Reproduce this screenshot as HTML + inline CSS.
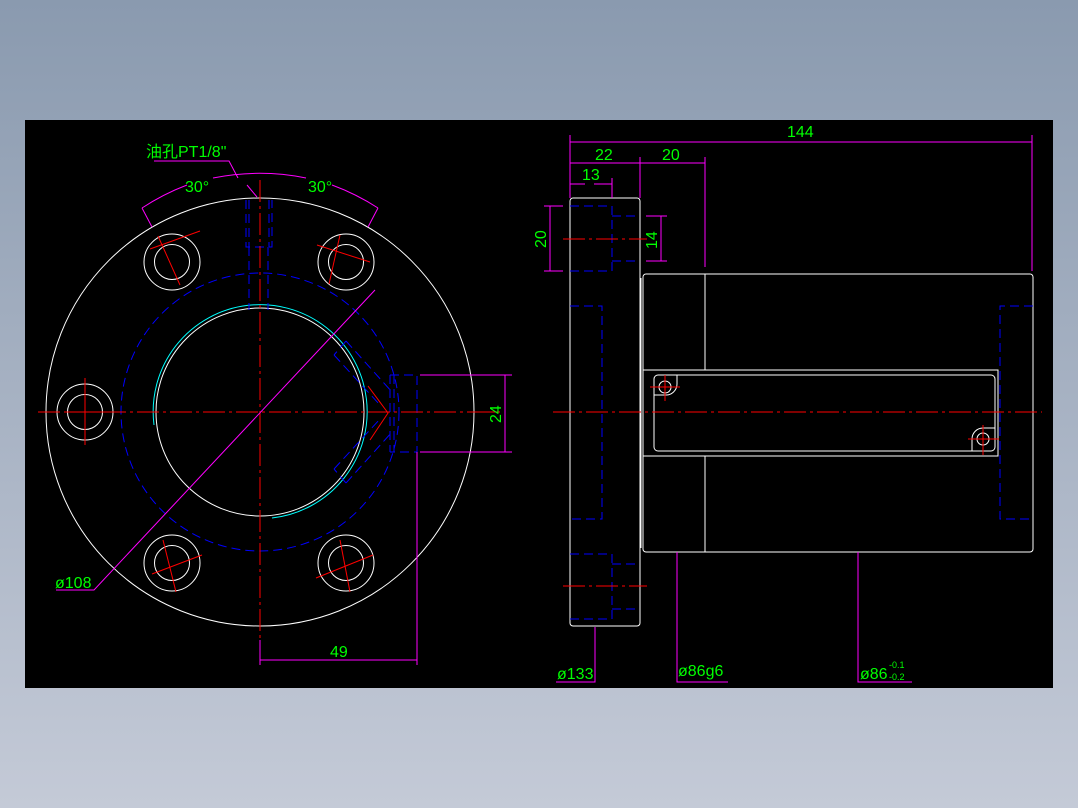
<!DOCTYPE html>
<html><head><meta charset="utf-8"><style>
html,body{margin:0;padding:0;width:1078px;height:808px;overflow:hidden;background:linear-gradient(#8a9aaf,#c4cad7);}
svg{display:block}
text{font-family:"Liberation Sans","Noto Sans CJK SC",sans-serif;fill:#00ff00;font-size:16px}
</style></head><body>
<svg width="1078" height="808" viewBox="0 0 1078 808">
<defs>
<linearGradient id="bg" x1="0" y1="0" x2="0" y2="1"><stop offset="0" stop-color="#8a9aaf"/><stop offset="1" stop-color="#c4cad7"/></linearGradient>
</defs>
<rect width="1078" height="808" fill="url(#bg)"/>
<rect x="25" y="120" width="1028" height="568" fill="#000"/>

<!-- LEFT VIEW -->
<g fill="none" stroke="#fff" stroke-width="1">
<circle cx="260" cy="412" r="214"/>
<circle cx="260" cy="412" r="104"/>
<circle cx="172" cy="262" r="28"/><circle cx="172" cy="262" r="17.5"/>
<circle cx="346" cy="262" r="28"/><circle cx="346" cy="262" r="17.5"/>
<circle cx="85" cy="412" r="28"/><circle cx="85" cy="412" r="17.5"/>
<circle cx="172" cy="563" r="28"/><circle cx="172" cy="563" r="17.5"/>
<circle cx="346" cy="563" r="28"/><circle cx="346" cy="563" r="17.5"/>
</g>
<path d="M154 425 A107 107 0 1 1 272 518" fill="none" stroke="#00ffff" stroke-width="1"/>
<g fill="none" stroke="#0000ff" stroke-width="1" stroke-dasharray="9 5">
<circle cx="260" cy="412" r="139"/>
<path d="M246 200V247H272V200M249 247V310M268 247V310M249 200V247M269 200V247"/>
<path d="M390 375H417V452H390M390 375V452M394 375V452"/>
<path d="M346 341L392 392M334 355L380 405M346 483L392 432M334 469L380 419"/>
<path d="M346 341L334 355M346 483L334 469"/>
</g>
<g fill="none" stroke="#ff0000" stroke-width="1">
<path d="M38 412H475" stroke-dasharray="22 4 3 4"/>
<path d="M475 412H500"/>
<path d="M260 180V640" stroke-dasharray="22 4 3 4"/>
<path d="M368 386L388 413L370 440"/>
<path d="M150 249L200 231M158 236L180 285"/>
<path d="M317 245L370 262M340 235L329 284"/>
<path d="M85 378V445M64 412H106" />
<path d="M152 574L202 555M163 540L176 592"/>
<path d="M316 578L373 555M340 540L350 592"/>
</g>
<g fill="none" stroke="#ff00ff" stroke-width="1">
<path d="M142 208A235 235 0 0 1 187 185M213 178A235 235 0 0 1 306 178M332 185A235 235 0 0 1 378 208"/>
<path d="M142 208L152 227M378 208L368 227"/>
<path d="M154 161H229L238 178M247 185L257 197"/>
<path d="M375 290L94 590H56"/>
<path d="M420 375H512M420 452H512M505 375V452"/>
<path d="M417 452V665M260 640V665M260 660H417"/>
</g>
<text x="146" y="157">油孔PT1/8"</text>
<text x="185" y="192">30°</text>
<text x="308" y="192">30°</text>
<text x="55" y="588">ø108</text>
<text x="330" y="657">49</text>
<text transform="translate(501,423) rotate(-90)">24</text>

<!-- RIGHT VIEW -->
<g fill="none" stroke="#fff" stroke-width="1">
<rect x="570" y="198" width="70" height="428" rx="3"/>
<rect x="643" y="274" width="390" height="278" rx="3"/>
<path d="M641 278V548M705 274V370M705 456V552"/>
<rect x="643" y="370" width="355" height="86"/>
<rect x="654" y="375" width="341" height="76" rx="4"/>
<circle cx="665" cy="387" r="6"/><circle cx="983" cy="439" r="6"/>
<path d="M654 395H665A11 11 0 0 0 677 384V375"/>
<path d="M995 428H983A11 11 0 0 0 972 439V451"/>
</g>
<g fill="none" stroke="#0000ff" stroke-width="1" stroke-dasharray="9 5">
<path d="M570 206H612V271H570M612 216H640M612 261H640"/>
<path d="M570 306H602V519H570"/>
<path d="M570 554H612V619H570M612 564H640M612 609H640"/>
<path d="M1033 306H1000V519H1033"/>
</g>
<g fill="none" stroke="#ff0000" stroke-width="1">
<path d="M553 412H1042" stroke-dasharray="22 4 3 4"/>
<path d="M563 239H647M563 586H647" stroke-dasharray="22 4 3 4"/>
<path d="M650 387H680M665 375V401M968 439H999M983 425V455"/>
</g>
<g fill="none" stroke="#ff00ff" stroke-width="1">
<path d="M570 135V198M1032 135V271M570 142H1032"/>
<path d="M570 163H705M640 157V198M705 157V267"/>
<path d="M570 184H585M594 184H612M612 178V198"/>
<path d="M544 206H563M544 271H563M550 206V271"/>
<path d="M646 216H667M646 261H667M661 216V261"/>
<path d="M595 627V682H556M677 552V682H728M858 552V682H912"/>
</g>
<text x="787" y="137">144</text>
<text x="595" y="160">22</text>
<text x="662" y="160">20</text>
<text x="582" y="180">13</text>
<text transform="translate(546,248) rotate(-90)">20</text>
<text transform="translate(657,249) rotate(-90)">14</text>
<text x="557" y="679">ø133</text>
<text x="678" y="676">ø86g6</text>
<text x="860" y="679">ø86</text>
<text x="889" y="668" style="font-size:9px">-0.1</text>
<text x="889" y="680" style="font-size:9px">-0.2</text>
</svg>
</body></html>
